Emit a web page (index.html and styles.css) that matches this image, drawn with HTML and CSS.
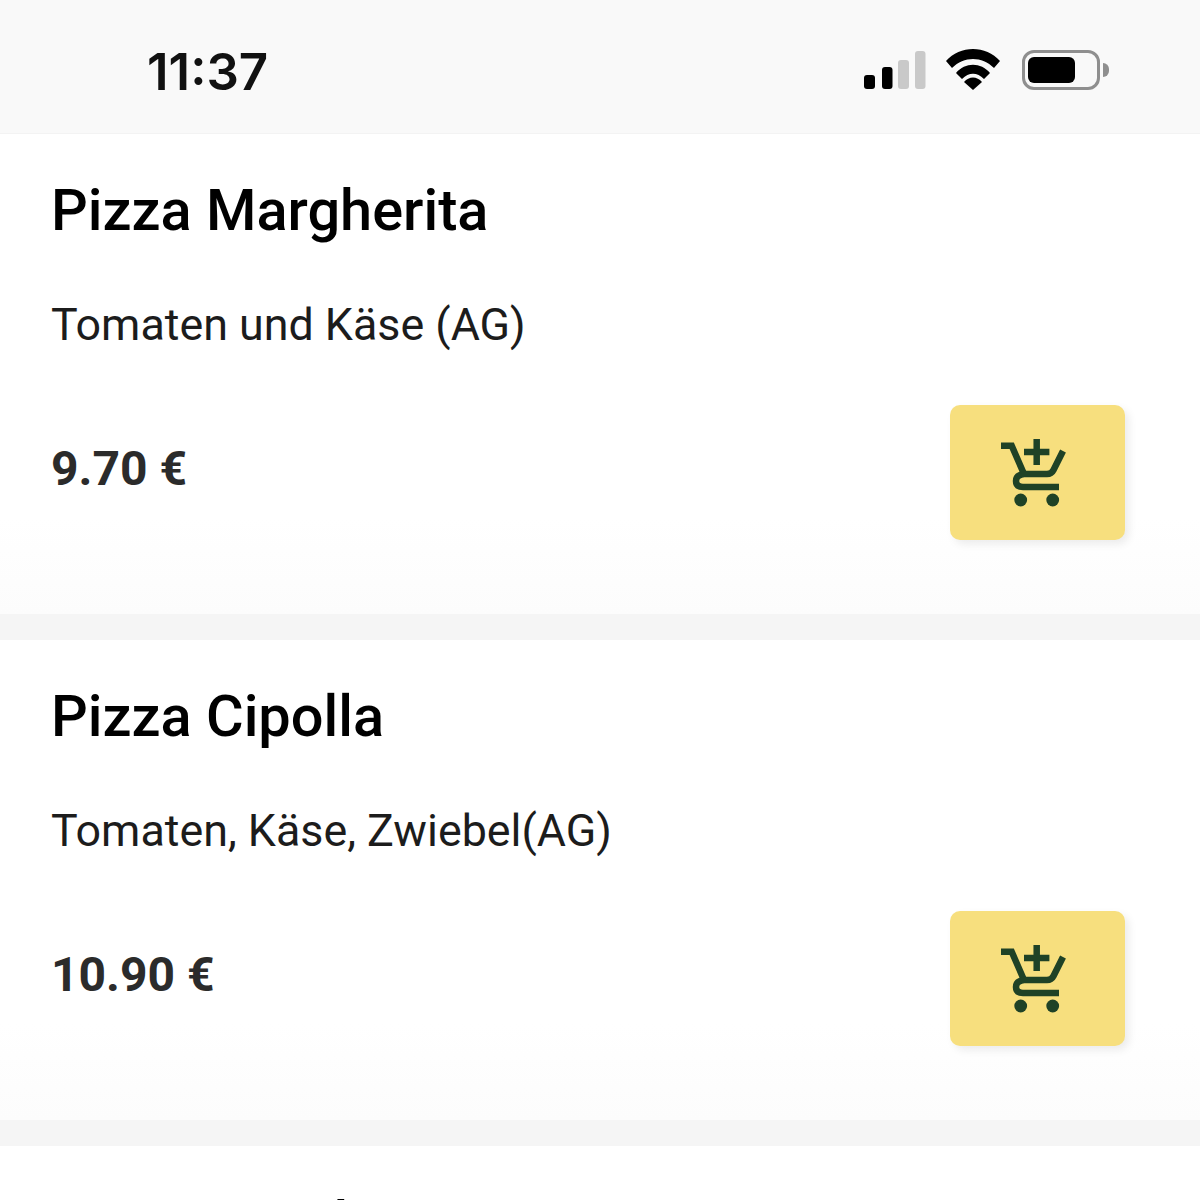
FILE: index.html
```html
<!DOCTYPE html>
<html>
<head>
	<title>Speisekarte</title>
	<link rel="stylesheet" href="styles.css">
</head>
<body>
	<header class="status-bar">
		<span class="time">11:37</span>
		<div class="status-icons">
			<svg class="signal" width="62" height="38" viewBox="0 0 62 38">
				<rect x="0" y="24" width="11" height="14" rx="3" fill="#000"/>
				<rect x="18" y="16" width="10.5" height="22" rx="3" fill="#000"/>
				<rect x="34" y="9" width="11" height="29" rx="3" fill="#c9c9c9"/>
				<rect x="51" y="0" width="10.5" height="38" rx="3" fill="#c9c9c9"/>
			</svg>
			<svg class="wifi" width="54" height="41" viewBox="0 0 54 41">
				<path d="M0 12 C14 -4 40 -4 54 12 L48 19 C36 7 18 7 6 19 Z" fill="#000"/>
				<path d="M10 24 C19 13 35 13 44 24 L38 30 C31 23 23 23 16 30 Z" fill="#000"/>
				<path d="M18 33 C23 27 31 27 36 33 L27 41 Z" fill="#000"/>
			</svg>
			<div class="battery">
				<div class="battery-body"><div class="battery-level"></div></div>
				<div class="battery-tip"></div>
			</div>
		</div>
	</header>
	<main>
		<section class="dish">
			<h2>Pizza Margherita</h2>
			<p class="desc">Tomaten und Käse (AG)</p>
			<div class="dish-foot">
				<span class="price">9.70 €</span>
				<button class="add-btn">
					<svg width="73" height="68" viewBox="0 0 73 68"><use href="#cart"/></svg>
				</button>
			</div>
		</section>
		<section class="dish">
			<h2>Pizza Cipolla</h2>
			<p class="desc">Tomaten, Käse, Zwiebel(AG)</p>
			<div class="dish-foot">
				<span class="price">10.90 €</span>
				<button class="add-btn">
					<svg width="73" height="68" viewBox="0 0 73 68"><use href="#cart"/></svg>
				</button>
			</div>
		</section>
		<section class="dish">
			<h2>Pizza Funghi</h2>
		</section>
	</main>
	<svg class="defs" width="0" height="0">
		<symbol id="cart" viewBox="0 0 73 68">
			<g fill="none" stroke="#1f4226" stroke-width="6.5">
				<path d="M0 6.7 H10.7 L23 35"/>
				<path d="M23 13 H48.4 M35.7 0 V26"/>
				<path d="M62 12 L52.5 31 Q50.5 35 46 35 H23 Q15 36 15 42 Q15 48 22 48 H58"/>
			</g>
			<circle cx="19.7" cy="61" r="6.4" fill="#1f4226"/>
			<circle cx="51.7" cy="61" r="6.4" fill="#1f4226"/>
		</symbol>
	</svg>
</body>
</html>
```

FILE: styles.css
```css
html, body {
	height: 100%;
}

body {
	overflow: hidden;
	margin: 0;
	color: #000;
	font-family: Roboto, sans-serif;
	background: #f5f5f5;
}

.status-bar {
	display: flex;
	justify-content: space-between;
	align-items: center;
	height: 134px;
	padding: 6px 91px 0 147px;
	box-sizing: border-box;
	border-bottom: 1px solid #f3f3f3;
	background: #f9f9f9;
}

.time {
	margin-top: 4px;
	font-family: Inter, sans-serif;
	font-size: 51px;
	font-weight: 600;
	color: #111;
}

.status-icons {
	display: flex;
	align-items: center;
	gap: 20px;
}

.wifi {
	margin-right: 2px;
}

.battery {
	display: flex;
	align-items: center;
	gap: 3px;
}

.battery-body {
	width: 78px;
	height: 40px;
	padding: 4px 3px;
	box-sizing: border-box;
	border: 3px solid #8f8f8f;
	border-radius: 12px;
}

.battery-level {
	width: 47px;
	height: 100%;
	border-radius: 6px;
	background: #000;
}

.battery-tip {
	width: 6px;
	height: 14px;
	border-radius: 0 7px 7px 0;
	background: #8f8f8f;
}

main {
	display: flex;
	flex-direction: column;
	gap: 26px;
}

.dish {
	flex: none;
	height: 480px;
	padding: 43px 75px 0 51px;
	box-sizing: border-box;
	background: linear-gradient(#fff 80%, #fcfcfc);
}

.dish h2 {
	margin: 0;
	font-size: 57.7px;
	font-weight: 500;
	line-height: 66px;
}

.desc {
	margin: 56px 0 0;
	font-size: 44.8px;
	line-height: 52px;
	color: #1c1c1c;
}

.dish-foot {
	display: flex;
	justify-content: space-between;
	align-items: center;
	margin-top: 54px;
}

.price {
	margin-bottom: 9px;
	font-size: 48px;
	font-weight: 700;
	color: #2b2b2b;
}

.add-btn {
	display: flex;
	justify-content: center;
	align-items: center;
	width: 175px;
	height: 135px;
	padding: 0;
	border: 0;
	border-radius: 10px;
	background: #f7df7e;
	box-shadow: 4px 4px 8px rgba(0, 0, 0, 0.08);
}

.defs {
	position: absolute;
}
```
